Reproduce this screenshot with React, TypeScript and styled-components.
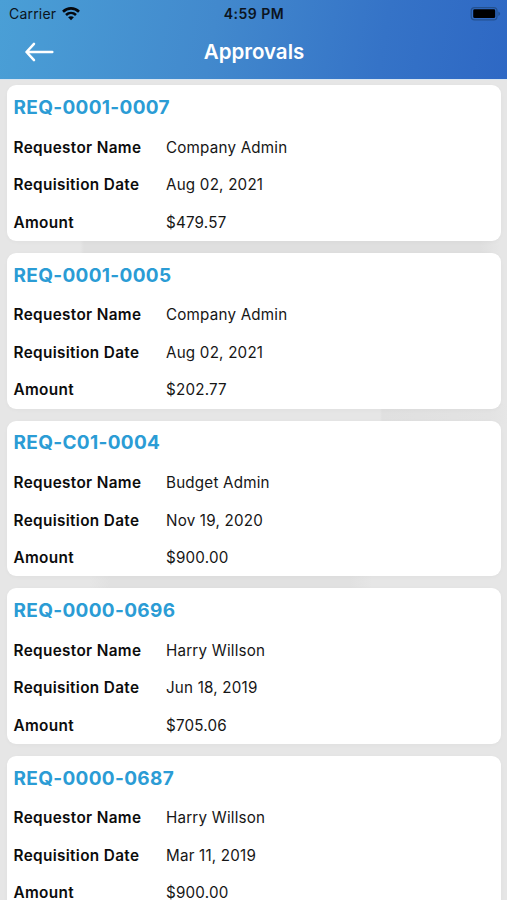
import React from "react";
import styled, { createGlobalStyle } from "styled-components";

const GlobalStyle = createGlobalStyle`
  * { box-sizing: border-box; }
  html, body { margin: 0; padding: 0; }
  body {
    height: 900px;
    overflow: hidden;
    font-family: Inter, "Liberation Sans", sans-serif;
    background: #e5e5e5;
  }
`;

const Screen = styled.main`
  height: 900px;
  overflow: hidden;
  background:
    linear-gradient(90deg, transparent 80px, #dfdfdf 84px, #dfdfdf 480px, transparent 500px) 0 236px / 100% 20px no-repeat,
    linear-gradient(90deg, transparent 380px, #e0e0e0 382px, #e3e3e3 490px, transparent) 0 404px / 100% 20px no-repeat,
    linear-gradient(90deg, transparent 90px, #e1e1e1 110px, #e1e1e1 350px, transparent 372px) 0 572px / 100% 20px no-repeat,
    #e6e6e6;
`;

const Header = styled.header`
  height: 79px;
  background: linear-gradient(100deg, #4a9fd6 0%, #4289cd 42%, #3573c7 75%, #2e68c4 100%);
`;

const StatusBar = styled.div`
  display: grid;
  grid-template-columns: 1fr auto 1fr;
  align-items: center;
  height: 27px;
  padding: 0 6px 0 9px;
  color: #0b1420;
`;

const Carrier = styled.div`
  display: flex;
  align-items: center;
  gap: 6px;
  font-size: 14px;
  line-height: 27px;
  letter-spacing: 0.2px;
`;

const Clock = styled.div`
  margin-left: -2px;
  font-size: 14px;
  font-weight: 600;
  letter-spacing: 0.5px;
`;

const Battery = styled.svg`
  justify-self: end;
`;

const NavBar = styled.nav`
  display: grid;
  grid-template-columns: 1fr auto 1fr;
  align-items: center;
  height: 50px;
  padding-left: 24px;
  color: #fff;
`;

const BackButton = styled.button`
  display: flex;
  justify-self: start;
  padding: 0;
  border: 0;
  background: none;
  color: inherit;
`;

const Title = styled.h1`
  margin: 0;
  padding-right: 23px;
  font-size: 20.5px;
  font-weight: 600;
  line-height: 50px;
`;

const List = styled.section`
  display: flex;
  flex-direction: column;
  gap: 12.1px;
  padding: 5.3px 6px 0 7px;
  border-top: 1px solid #d7e4f0;
`;

const Card = styled.article`
  flex: none;
  height: 155.6px;
  padding: 6.7px 6.5px 0;
  border-radius: 9px;
  background: #fff;
  box-shadow: 0 1px 4px rgba(0, 0, 0, 0.03);
`;

const RequestId = styled.h2`
  margin: 0 0 5.7px;
  color: #2b9cd5;
  font-size: 19px;
  font-weight: 700;
  line-height: 31px;
  letter-spacing: 0.32px;
`;

const Row = styled.div`
  display: grid;
  grid-template-columns: 152.5px 1fr;
  height: 37.5px;
  font-size: 15px;
  line-height: 37.5px;
  color: #161616;
`;

const Label = styled.span`
  font-size: 15.3px;
  font-weight: 600;
  letter-spacing: 0.35px;
  color: #0c0c0c;
`;

const Value = styled.span`
  font-size: 15.2px;
  letter-spacing: 0.2px;
`;

const requests = [
  { id: "REQ-0001-0007", name: "Company Admin", date: "Aug 02, 2021", amount: "$479.57" },
  { id: "REQ-0001-0005", name: "Company Admin", date: "Aug 02, 2021", amount: "$202.77" },
  { id: "REQ-C01-0004", name: "Budget Admin", date: "Nov 19, 2020", amount: "$900.00" },
  { id: "REQ-0000-0696", name: "Harry Willson", date: "Jun 18, 2019", amount: "$705.06" },
  { id: "REQ-0000-0687", name: "Harry Willson", date: "Mar 11, 2019", amount: "$900.00" },
];

const WifiIcon = () => (
  <svg width="18" height="14" viewBox="0 0 18 14" fill="none" stroke="#05080d" strokeWidth="2.6">
    <path d="M1 4.7C5.6.2 12.4.2 17 4.7" />
    <path d="M4 8c2.9-2.7 7.1-2.7 10 0" />
    <path d="M9 13.2 6.1 10.3c1.6-1.5 4.2-1.5 5.8 0Z" fill="#05080d" stroke="none" />
  </svg>
);

export default function App() {
  return (
    <>
      <GlobalStyle />
      <Screen>
        <Header>
          <StatusBar>
            <Carrier>
              Carrier
              <WifiIcon />
            </Carrier>
            <Clock>4:59 PM</Clock>
            <Battery width="31" height="14" viewBox="0 0 31 14">
              <rect x="1.2" y="0.6" width="25.8" height="12.2" rx="3.4" fill="none" stroke="#24518f" strokeWidth="1.2" />
              <rect x="3.2" y="2.3" width="22" height="8.8" rx="1.4" fill="#000" />
              <path d="M28.3 4.5c2.4.8 2.4 3.6 0 4.4Z" fill="#24518f" />
            </Battery>
          </StatusBar>
          <NavBar>
            <BackButton aria-label="Back">
              <svg width="30" height="20" viewBox="0 0 30 20" fill="none" stroke="currentColor" strokeWidth="2.5" strokeLinecap="round" strokeLinejoin="round">
                <path d="M28.3 10H2.5M10 1.8 2.5 10l7.5 8.2" />
              </svg>
            </BackButton>
            <Title>Approvals</Title>
          </NavBar>
        </Header>
        <List>
          {requests.map((request) => (
            <Card key={request.id}>
              <RequestId>{request.id}</RequestId>
              <Row>
                <Label>Requestor Name</Label>
                <Value>{request.name}</Value>
              </Row>
              <Row>
                <Label>Requisition Date</Label>
                <Value>{request.date}</Value>
              </Row>
              <Row>
                <Label>Amount</Label>
                <Value>{request.amount}</Value>
              </Row>
            </Card>
          ))}
        </List>
      </Screen>
    </>
  );
}
